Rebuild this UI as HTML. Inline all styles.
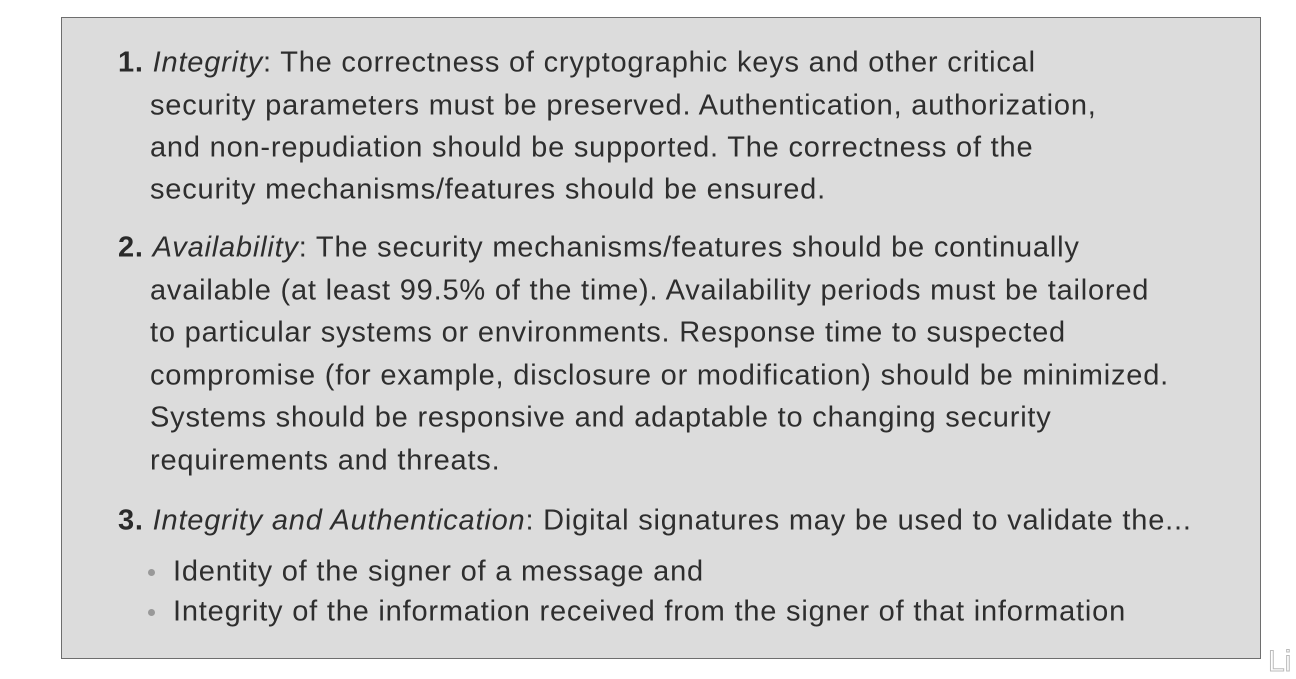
<!DOCTYPE html>
<html><head><meta charset="utf-8"><style>
html,body{margin:0;padding:0;background:#fff;width:1296px;height:675px;overflow:hidden}
.box{position:absolute;left:61px;top:17px;width:1200px;height:642px;background:#dcdcdc;border:1.5px solid #6e6e6e;box-sizing:border-box}
.l{position:absolute;font-family:"Liberation Sans",sans-serif;font-size:29px;letter-spacing:0.8px;color:#2e2e2e;white-space:nowrap;line-height:1;transform:translateY(-50%)}
b{color:#2a2a2a}
.dot{position:absolute;width:7px;height:7px;border-radius:50%;background:#999}
.li{position:absolute;left:1268px;top:645px;font-family:"Liberation Sans",sans-serif;font-size:30px;color:#fff;-webkit-text-stroke:1px #bbb}
</style></head><body>
<div class="box"></div>
<div class="l" style="left:118px;top:63px"><b>1.</b> <i>Integrity</i>: The correctness of cryptographic keys and other critical</div>
<div class="l" style="left:150px;top:106px">security parameters must be preserved. Authentication, authorization,</div>
<div class="l" style="left:150px;top:148px">and non-repudiation should be supported. The correctness of the</div>
<div class="l" style="left:150px;top:190px">security mechanisms/features should be ensured.</div>
<div class="l" style="left:118px;top:248px"><b>2.</b> <i>Availability</i>: The security mechanisms/features should be continually</div>
<div class="l" style="left:150px;top:291px">available (at least 99.5% of the time). Availability periods must be tailored</div>
<div class="l" style="left:150px;top:333px">to particular systems or environments. Response time to suspected</div>
<div class="l" style="left:150px;top:376px">compromise (for example, disclosure or modification) should be minimized.</div>
<div class="l" style="left:150px;top:418px">Systems should be responsive and adaptable to changing security</div>
<div class="l" style="left:150px;top:461px">requirements and threats.</div>
<div class="l" style="left:118px;top:521px"><b>3.</b> <i>Integrity and Authentication</i>: Digital signatures may be used to validate the...</div>
<div class="dot" style="left:148px;top:569px"></div>
<div class="l" style="left:173px;top:572px">Identity of the signer of a message and</div>
<div class="dot" style="left:148px;top:609px"></div>
<div class="l" style="left:173px;top:612px">Integrity of the information received from the signer of that information</div>
<div class="li">Li</div>
</body></html>
